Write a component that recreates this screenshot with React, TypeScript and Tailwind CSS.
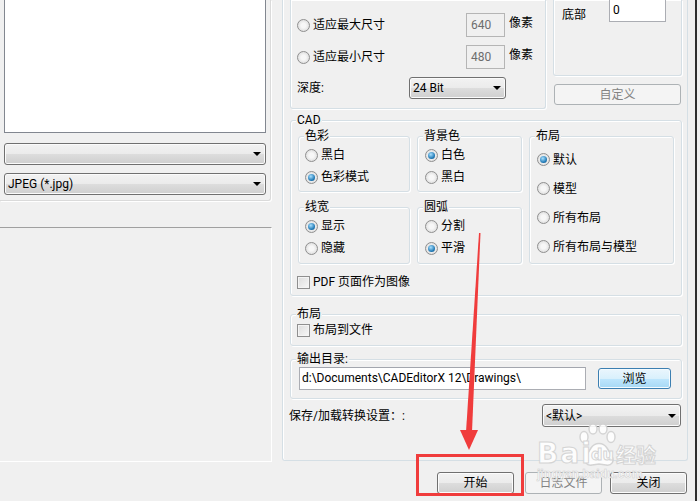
import React from 'react'

const btnGrad = 'bg-[linear-gradient(#f2f2f2,#ebebeb_50%,#dddddd_50%,#cfcfcf)]'

function Radio({ label, checked = false }: { label: string; checked?: boolean }) {
  return (
    <div className="flex items-center">
      <span className="w-[13px] h-[13px] rounded-full border border-[#8f8f8f] bg-[radial-gradient(circle,#f7f7f7_30%,#d2d2d2)] flex items-center justify-center shrink-0">
        {checked && (
          <span className="w-[7px] h-[7px] rounded-full bg-[radial-gradient(circle_at_40%_35%,#a8e0ff,#1f78b4_65%,#0d3f68)]" />
        )}
      </span>
      <span className="ml-[3px] whitespace-nowrap">{label}</span>
    </div>
  )
}

function Check({ label }: { label: string }) {
  return (
    <div className="flex items-center">
      <span className="w-[13px] h-[13px] border border-[#8f8f8f] bg-[linear-gradient(135deg,#dcdcdc,#f8f8f8)] shadow-[inset_0_0_0_1px_#f4f4f4] shrink-0" />
      <span className="ml-[3px] whitespace-nowrap">{label}</span>
    </div>
  )
}

function Group({ title, className = '', children }: { title?: string; className?: string; children?: React.ReactNode }) {
  return (
    <div className={`relative border border-[#d5dfe5] rounded-[3px] shadow-[inset_1px_1px_0_#fff,1px_1px_0_#fff] ${className}`}>
      {title && (
        <span className="absolute -top-[9px] left-[5px] px-[1px] bg-[#f0f0f0] leading-[16px] whitespace-nowrap">{title}</span>
      )}
      {children}
    </div>
  )
}

function Combo({ text = '', className = '' }: { text?: string; className?: string }) {
  return (
    <div className={`flex items-center border border-[#707070] rounded-[3px] ${btnGrad} shadow-[inset_0_0_0_1px_#fbfbfb] pl-[3px] pr-[4px] ${className}`}>
      <span className="flex-1 truncate">{text}</span>
      <svg width="8" height="4" viewBox="0 0 8 4">
        <path d="M0 0h8L4 4z" fill="#000" />
      </svg>
    </div>
  )
}

function Button({ label, className = '', disabled = false, primary = false }: {
  label: string; className?: string; disabled?: boolean; primary?: boolean
}) {
  const look = disabled
    ? 'border-[#adb2b5] bg-[#f4f4f4] text-[#838383]'
    : primary
      ? 'border-[#3c7fb1] bg-[linear-gradient(#eaf6fd,#d9f0fc_50%,#bee6fd_50%,#a7d9f5)] shadow-[inset_0_0_0_1px_#f4fbff]'
      : `border-[#707070] ${btnGrad} shadow-[inset_0_0_0_1px_#fcfcfc]`
  return (
    <div className={`flex items-center justify-center border rounded-[3px] ${look} ${className}`}>{label}</div>
  )
}

function Watermark() {
  const stroke = 'text-white [-webkit-text-stroke:1px_#d2d2d2] font-bold'
  return (
    <div className="absolute left-[536px] top-[424px] w-[130px] h-[60px] pointer-events-none opacity-90">
      <svg width="130" height="60" viewBox="0 0 130 60" className="absolute left-0 top-0">
        <g fill="#fff" stroke="#d2d2d2" strokeWidth="1.5">
          <ellipse cx="48" cy="13" rx="4" ry="5.5" />
          <ellipse cx="57" cy="5" rx="4" ry="5" />
          <ellipse cx="67" cy="5" rx="4" ry="5" />
          <ellipse cx="75" cy="13" rx="4" ry="5.5" />
          <path d="M55 24c4-6 12-6 16 0l5 8c3 6-1 10-6 9l-7-1-7 1c-5 1-9-3-6-9z" />
        </g>
      </svg>
      <span className={`absolute left-[1px] top-[17px] text-[28px] leading-[26px] tracking-[2px] [font-family:'DejaVu_Sans',sans-serif] ${stroke}`}>Bai</span>
      <span className={`absolute left-[55px] top-[22px] text-[16px] leading-[18px] [font-family:'DejaVu_Sans',sans-serif] ${stroke}`}>du</span>
      <span className={`absolute left-[80px] top-[20px] text-[20px] leading-[22px] [font-family:'Noto_Sans_CJK_SC',sans-serif] ${stroke}`}>经验</span>
      <span className="absolute left-[1px] top-[43px] text-[12px] leading-[14px] font-bold text-white [-webkit-text-stroke:0.6px_#cfcfcf] [font-family:'Liberation_Sans',sans-serif]">jingyan.baidu.com</span>
    </div>
  )
}

export default function App() {
  return (
    <div className="relative w-[700px] h-[501px] overflow-hidden bg-[#f0f0f0] text-[12px] leading-[16px] text-black [font-family:'Roboto','Noto_Sans_CJK_SC',sans-serif] flex">
      <div className="w-[695px] flex flex-col">
        <div className="flex h-[462px]">
          {/* left column */}
          <div className="w-[272px] flex flex-col">
            <div className="w-[271px] h-[201px] border-r border-b border-[#dadada] rounded-br-[3px] shadow-[1px_1px_0_#fff]">
              <div className="ml-[4px] -mt-px w-[262px] h-[134px] bg-white border border-[#828790]" />
              <Combo className="ml-[4px] mt-[10px] w-[262px] h-[22px]" />
              <Combo text="JPEG (*.jpg)" className="ml-[4px] mt-[8px] w-[262px] h-[22px]" />
            </div>
            <div className="mt-[26px] w-[272px] h-[235px] border-t border-t-[#a0a0a0] border-r border-b border-white" />
          </div>

          {/* right column */}
          <div className="ml-[10px] w-[406px] h-[461px] border-x border-b border-[#d5dfe5] rounded-b-[3px] shadow-[inset_1px_0_0_#fff] flex flex-col">
            <div className="flex items-start">
              <Group className="ml-[7px] w-[256px] h-[109px] border-t-0 rounded-t-none">
                <div className="pl-[6px] flex flex-col">
                  <div className="mt-[13px] h-[24px] flex items-center">
                    <div className="w-[169px]"><Radio label="适应最大尺寸" /></div>
                    <div className="w-[39px] h-[24px] border border-[#b5b5b5] bg-[#f0f0f0] text-[#6d6d6d] pl-[4px] leading-[22px]">640</div>
                    <span className="ml-[4px] -mt-[4px]">像素</span>
                  </div>
                  <div className="mt-[8px] h-[24px] flex items-center">
                    <div className="w-[169px]"><Radio label="适应最小尺寸" /></div>
                    <div className="w-[39px] h-[24px] border border-[#b5b5b5] bg-[#f0f0f0] text-[#6d6d6d] pl-[4px] leading-[22px]">480</div>
                    <span className="ml-[4px] -mt-[4px]">像素</span>
                  </div>
                  <div className="mt-[8px] h-[22px] flex items-center">
                    <span className="w-[112px]">深度:</span>
                    <Combo text="24 Bit" className="w-[97px] h-[22px]" />
                  </div>
                </div>
              </Group>
              <div className="ml-[7px] w-[129px] flex flex-col">
                <Group className="w-[129px] h-[76px] border-t-0 rounded-t-none">
                  <div className="flex items-start pl-[8px]">
                    <span className="mt-[7px] w-[24px]">底部</span>
                    <div className="ml-[23px] -mt-px w-[57px] h-[23px] bg-white border border-[#abadb3] pl-[3px] pt-[2px]">0</div>
                  </div>
                </Group>
                <Button label="自定义" disabled className="mt-[8px] ml-[1px] w-[127px] h-[21px]" />
              </div>
            </div>

            <Group title="CAD" className="mt-[11px] ml-[7px] w-[392px] h-[176px]">
              <div className="flex pt-[15px] pl-[7px]">
                <div className="grid grid-cols-[112px_105px] gap-x-[7px] gap-y-[15px]">
                  <Group title="色彩" className="h-[56px]">
                    <div className="flex flex-col pt-[7px] pl-[6px]">
                      <div className="h-[22px] flex items-center"><Radio label="黑白" /></div>
                      <div className="h-[22px] flex items-center"><Radio label="色彩模式" checked /></div>
                    </div>
                  </Group>
                  <Group title="背景色" className="h-[56px]">
                    <div className="flex flex-col pt-[7px] pl-[7px]">
                      <div className="h-[22px] flex items-center"><Radio label="白色" checked /></div>
                      <div className="h-[22px] flex items-center"><Radio label="黑白" /></div>
                    </div>
                  </Group>
                  <Group title="线宽" className="h-[57px]">
                    <div className="flex flex-col pt-[7px] pl-[6px]">
                      <div className="h-[22px] flex items-center"><Radio label="显示" checked /></div>
                      <div className="h-[22px] flex items-center"><Radio label="隐藏" /></div>
                    </div>
                  </Group>
                  <Group title="圆弧" className="h-[57px]">
                    <div className="flex flex-col pt-[7px] pl-[7px]">
                      <div className="h-[22px] flex items-center"><Radio label="分割" /></div>
                      <div className="h-[22px] flex items-center"><Radio label="平滑" checked /></div>
                    </div>
                  </Group>
                </div>
                <Group title="布局" className="ml-[7px] w-[145px] h-[128px]">
                  <div className="flex flex-col pt-[8px] pl-[7px]">
                    <div className="h-[29px] flex items-center"><Radio label="默认" checked /></div>
                    <div className="h-[29px] flex items-center"><Radio label="模型" /></div>
                    <div className="h-[29px] flex items-center"><Radio label="所有布局" /></div>
                    <div className="h-[29px] flex items-center"><Radio label="所有布局与模型" /></div>
                  </div>
                </Group>
              </div>
              <div className="mt-[10px] ml-[6px] h-[16px] flex items-center">
                <Check label="PDF 页面作为图像" />
              </div>
            </Group>

            <Group title="布局" className="mt-[18px] ml-[7px] w-[392px] h-[32px]">
              <div className="pt-[7px] pl-[6px] h-[16px] flex items-center box-content">
                <Check label="布局到文件" />
              </div>
            </Group>

            <Group title="输出目录:" className="mt-[13px] ml-[7px] w-[392px] h-[40px]">
              <div className="flex items-start pt-[7px] pl-[8px]">
                <div className="w-[287px] h-[23px] bg-white border border-[#abadb3] border-t-[#a3a6ae] pl-[2px] leading-[21px] whitespace-nowrap overflow-hidden">
                  d:\Documents\CADEditorX 12\Drawings\
                </div>
                <Button label="浏览" primary className="ml-[12px] mt-px w-[73px] h-[21px]" />
              </div>
            </Group>

            <div className="mt-[5px] pl-[6px] h-[23px] flex items-center">
              <span className="w-[253px] whitespace-nowrap">保存/加载转换设置：:</span>
              <Combo text="<默认>" className="w-[139px] h-[23px]" />
            </div>
          </div>
        </div>

        {/* bottom buttons */}
        <div className="flex mt-[10px] pl-[437px]">
          <Button label="开始" className="w-[77px] h-[22px]" />
          <Button label="日志文件" disabled className="ml-[11px] w-[77px] h-[22px]" />
          <Button label="关闭" className="ml-[8px] w-[77px] h-[22px]" />
        </div>
      </div>
      <div className="w-[2px] bg-[#2e2e2e]" />

      <Watermark />

      {/* red annotation */}
      <div className="absolute left-[416px] top-[454px] w-[108px] h-[42px] border-[3px] border-[#f03c3c] pointer-events-none" />
      <svg className="absolute left-0 top-0 pointer-events-none" width="700" height="501">
        <polygon points="479,233 480.5,233 472,432 466,432" fill="#f03c3c" />
        <polygon points="460,430 478,430 469,450" fill="#f03c3c" />
      </svg>
    </div>
  )
}
